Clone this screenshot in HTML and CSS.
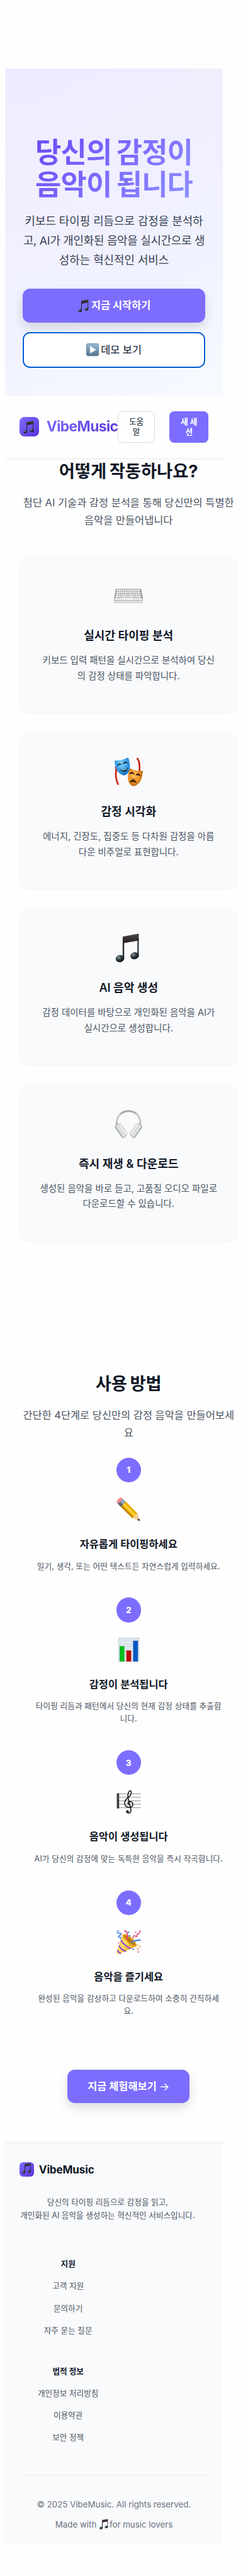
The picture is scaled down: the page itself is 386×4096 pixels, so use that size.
FILE: index.html
```html
<!DOCTYPE html>
<html lang="ko">
<head>
<meta charset="utf-8">
<meta name="viewport" content="width=device-width, initial-scale=1">
<title>VibeMusic</title>
<link rel="stylesheet" href="styles.css">
</head>
<body>
<svg class="defs" aria-hidden="true">
  <defs>
    <linearGradient id="beam" x1="0" y1="0" x2="0" y2="1"><stop offset="0" stop-color="#4a4547"/><stop offset=".35" stop-color="#2a2021"/><stop offset="1" stop-color="#1d1718"/></linearGradient>
    <radialGradient id="head" cx=".4" cy=".3" r=".7"><stop offset="0" stop-color="#8fa0a6"/><stop offset=".4" stop-color="#37444b"/><stop offset="1" stop-color="#0b0d10"/></radialGradient>
    <symbol id="note" viewBox="0 0 48 48">
      <path d="M14.4 5.4 40.8.6V12L16.8 16V42h-2.4z" fill="url(#beam)"/>
      <path d="M38.6 9h2.2v29h-2.2z" fill="#252b2f"/><path d="M14.4 14h2.2v28h-2.2z" fill="#252b2f"/>
      <ellipse cx="9.9" cy="41.7" rx="7" ry="5.8" transform="rotate(-14 9.9 41.7)" fill="url(#head)"/>
      <ellipse cx="34" cy="37" rx="7" ry="5.7" transform="rotate(-14 34 37)" fill="url(#head)"/>
    </symbol>
  </defs>
</svg>
<div class="page">
  <section class="hero">
    <h1 class="hero-title">당신의 감정이<br>음악이 됩니다</h1>
    <p class="hero-text">키보드 타이핑 리듬으로 감정을 분석하<br><span class="tight">고, AI가 개인화된 음악을 실시간으로 생</span><br>성하는 혁신적인 서비스</p>
    <div class="hero-actions">
      <button class="btn btn-primary"><svg class="btn-note"><use href="#note"/></svg>지금 시작하기</button>
      <button class="btn btn-outline">
        <svg class="btn-play" viewBox="0 0 21 21"><defs><linearGradient id="pl" x1="0" y1="0" x2="0" y2="1"><stop offset="0" stop-color="#9bbad2"/><stop offset=".5" stop-color="#7799b4"/><stop offset="1" stop-color="#58758f"/></linearGradient></defs><rect width="21" height="21" rx="3.6" fill="#5d7e98"/><rect x=".8" y=".8" width="19.4" height="19" rx="3" fill="url(#pl)"/><path d="M6.2 4.4v12.2L16.4 10.5z" fill="#fff"/></svg>데모 보기</button>
    </div>
  </section>

  <header class="topbar">
    <span class="logo"><svg><use href="#note"/></svg></span>
    <span class="brand">VibeMusic</span>
    <button class="nav-btn">도움<br>말</button>
    <button class="nav-btn nav-btn-new">새 세<br>션</button>
  </header>

  <section class="features">
    <h2 class="section-title">어떻게 작동하나요?</h2>
    <p class="section-text">첨단 AI 기술과 감정 분석을 통해 당신만의 특별한<br>음악을 만들어냅니다</p>
    <div class="cards">
      <article class="card">
        <svg class="card-icon" viewBox="0 0 48 48">
          <path d="M3.2 13.2h41.6l3 18.4v3.6H.2v-3.6z" fill="#f1f1f1" stroke="#a3a3a3" stroke-width=".9"/>
          <path d="M.5 32h47" stroke="#8d8d8d" stroke-width=".9"/>
          <path d="M3.6 14.200h40.8l2.4 15.400H1.200z" fill="#868686"/>
          <g stroke="#fff" stroke-width="2.300"><path d="M4.5 15.900h39" stroke-dasharray="2.6 .65"/><path d="M4 19.100h40" stroke-dasharray="3.3 .6 2.4 .6"/><path d="M3.5 22.300h41" stroke-dasharray="4 .6 2.5 .6 2.5 .6"/><path d="M3 25.400h42" stroke-dasharray="5 .6 2.5 .6 2.6 .6"/><path d="M2.400 28.500h43" stroke-dasharray="2.8 .6 2.8 .6 2.8 .6 20 .6"/></g>
        </svg>
        <h3>실시간 타이핑 분석</h3>
        <p>키보드 입력 패턴을 실시간으로 분석하여 당신<br>의 감정 상태를 파악합니다.</p>
      </article>
      <article class="card">
        <svg class="card-icon" viewBox="0 0 48 48">
          <defs><radialGradient id="mb" cx=".45" cy=".35" r=".7"><stop offset="0" stop-color="#8ed6ff"/><stop offset=".55" stop-color="#3aa0e8"/><stop offset="1" stop-color="#1663ae"/></radialGradient><radialGradient id="mo" cx=".4" cy=".4" r=".7"><stop offset="0" stop-color="#ffc05c"/><stop offset=".6" stop-color="#e58a22"/><stop offset="1" stop-color="#9c5208"/></radialGradient></defs>
          <path d="M3 15c2 9-1 12 .5 18 .6 4 1.200 8 3.500 12" fill="none" stroke="#c9240e" stroke-width="2.800"/><path d="M5.500 44.500 8.500 44" stroke="#e5391c" stroke-width="2"/>
          <path d="M38 1.500c4 5 4.500 10 4 22" fill="none" stroke="#c9240e" stroke-width="2.800"/>
          <path d="M1.200 5.800C10 5.500 17 3.600 23.500.4 27 10 27.500 21 23 26c-2 2.600-4 4-7 4C6.500 28 1 18 1.200 5.800z" fill="url(#mb)"/>
          <path d="M5.500 14.500c1-3.600 4.500-4.600 7-2.400-2.700-.8-5 .1-7 2.400zM15 11.200c1-3.700 5-4.400 7.200-1.700-2.700-.9-5-.4-7.200 1.700z" fill="#142534" stroke="#142534"/>
          <path d="M9.500 19.300c5 2 9 .8 13-2.300-.1 8.500-10 9-13 2.300z" fill="#082a45"/><path d="M11.500 20.500c4 1 7 .2 9.800-1.800" stroke="#dff" fill="none"/>
          <path d="M26.500 18.200C34 22.500 41 23.500 47.600 22.200 47 32 45 42 36 46.500c-3 1.400-6 1.300-8-.5-6.500-6-6.500-17-1.500-27.800z" fill="url(#mo)"/>
          <path d="M25.500 27.500c2.500-4 6-3.600 7.500.7-2.300-1.800-4.500-2-7.500-.7zM36 29.500c2.500-3.600 6.200-2.600 7 1.600-2-2-4.300-2.600-7-1.600z" fill="#2b1606" stroke="#2b1606"/>
          <path d="M26 42c1.500-7 9.500-6.600 11.500.8-4-2.400-7.500-2.700-11.500-.8z" fill="#3a1a03"/><path d="M29 35l3 1.500 3-.8" stroke="#8d4708" fill="none"/>
        </svg>
        <h3>감정 시각화</h3>
        <p>에너지, 긴장도, 집중도 등 다차원 감정을 아름<br>다운 비주얼로 표현합니다.</p>
      </article>
      <article class="card">
        <svg class="card-icon"><use href="#note"/></svg>
        <h3>AI 음악 생성</h3>
        <p>감정 데이터를 바탕으로 개인화된 음악을 AI가<br>실시간으로 생성합니다.</p>
      </article>
      <article class="card">
        <svg class="card-icon" viewBox="0 0 48 48">
          <defs><linearGradient id="cup" x1="0" y1="0" x2="1" y2="0"><stop offset="0" stop-color="#a9afb2"/><stop offset=".5" stop-color="#f0f1f1"/><stop offset="1" stop-color="#b3b3b3"/></linearGradient></defs>
          <path d="M4.600 25C4 14 10 2.600 24 2.600S44 14 43.400 25" fill="none" stroke="#9c9c9c" stroke-width="2.600"/>
          <path d="M4.600 22C5.500 12 11 2.600 24 2.600S42.500 12 43.400 22" fill="none" stroke="#e6e6e6" stroke-width="1.200"/>
          <path d="M11 7.500C18 1.500 30 1.500 37 7.500" fill="none" stroke="#aaa" stroke-width="3"/>
          <g><rect x="6.600" y="23" width="8.500" height="25" rx="4" transform="rotate(-34 10.800 35)" fill="url(#cup)" stroke="#858a8d" stroke-width=".7"/><rect x="11.500" y="22" width="5.500" height="22" rx="2.700" transform="rotate(-34 14 33)" fill="#ebe9e7" stroke="#b4b2b0" stroke-width=".6"/></g>
          <g transform="matrix(-1 0 0 1 48 0)"><rect x="6.600" y="23" width="8.500" height="25" rx="4" transform="rotate(-34 10.800 35)" fill="url(#cup)" stroke="#858a8d" stroke-width=".7"/><rect x="11.500" y="22" width="5.500" height="22" rx="2.700" transform="rotate(-34 14 33)" fill="#ebe9e7" stroke="#b4b2b0" stroke-width=".6"/></g>
        </svg>
        <h3>즉시 재생 &amp; 다운로드</h3>
        <p>생성된 음악을 바로 듣고, 고품질 오디오 파일로<br>다운로드할 수 있습니다.</p>
      </article>
    </div>
  </section>

  <section class="howto">
    <h2 class="section-title">사용 방법</h2>
    <p class="section-text">간단한 4단계로 당신만의 감정 음악을 만들어보세<br>요</p>
    <ol class="steps">
      <li class="step">
        <span class="step-num">1</span>
        <svg class="step-icon" viewBox="0 0 40 40">
          <g transform="translate(1.500 1.500) rotate(45)">
            <path d="M5-5.700H2.500C-1-5.700-1 5.700 2.500 5.700H5z" transform="translate(2.200 0)" fill="#f08f92"/>
            <path d="M7-5.700h7v11.400H7z" fill="#8d9cab"/><path d="M7 1h7v4.700H7z" fill="#4c4f54"/><path d="M9-5.700v11.400M11.500-5.700v11.400" stroke="#b8c5d2" stroke-width=".7"/>
            <path d="M14-5.700h27v11.400H14z" fill="#fbbf08"/><path d="M14-5.700h27v3H14z" fill="#e9a900"/><path d="M14-1.800h27v1.600H14z" fill="#ffe063"/><path d="M14 2.700h27v3H14z" fill="#bf8505"/>
            <path d="M41-5.700c-2 2 0 3 0 3.800-1.500 1-1.500 3 0 4-1 1.200-1 2.500 0 3.600L52.500 0z" fill="#f2cf93"/><path d="M48.500-2 53 0l-4.500 2z" fill="#2b2b2b"/>
          </g>
        </svg>
        <h3>자유롭게 타이핑하세요</h3>
        <p>일기, 생각, 또는 어떤 텍스트든 자연스럽게 입력하세요.</p>
      </li>
      <li class="step">
        <span class="step-num">2</span>
        <svg class="step-icon" viewBox="0 0 40 40">
          <rect x="3.200" y=".4" width="34" height="39.400" fill="#dbe5ee"/><path d="M3.200.9h34M3.600.4v39.400M36.900.4v39.400" stroke="#bccad6" stroke-width=".9"/>
          <path d="M11 1v38M21 1v38M31 1v38M4 8h33M4 16h33M4 24h33M4 32h33" stroke="#e9f0f6" stroke-width=".7"/>
          <rect x="5.200" y="14" width="8" height="25.800" fill="#08bd1b"/><rect x="16.200" y="21" width="8" height="18.800" fill="#bd0808"/><rect x="27.400" y="5" width="8" height="34.800" fill="#0759c0"/>
        </svg>
        <h3>감정이 분석됩니다</h3>
        <p>타이핑 리듬과 패턴에서 당신의 현재 감정 상태를 추출합<br>니다.</p>
      </li>
      <li class="step">
        <span class="step-num">3</span>
        <svg class="step-icon" viewBox="0 0 40 40">
          <path d="M2 6.500h38M2 12.200h38M2 18h38M2 23.700h38M2 29.300h38" stroke="#888" stroke-width="1"/><path d="M.6 5.600h3.800v25H.6z" fill="#3c3c3c"/>
          <path d="M20.500 24.200c-2.200-.3-2.300-5.200 1.500-5.200 6.500.2 7 9.500-.2 9.700-9.600.2-10.500-9.200-4.500-14.200 5.500-5 8.300-7.500 6.800-12-2.600-4-6.600 4-5 10.500l4.700 19.500c.9 6-5.500 7.400-7 3.500" fill="none" stroke="#1f1f1f" stroke-width="1.700" stroke-linecap="round"/><circle cx="18" cy="35.800" r="2.300" fill="#1f1f1f"/>
        </svg>
        <h3>음악이 생성됩니다</h3>
        <p>AI가 당신의 감정에 맞는 독특한 음악을 즉시 작곡합니다.</p>
      </li>
      <li class="step">
        <span class="step-num">4</span>
        <svg class="step-icon" viewBox="0 0 40 40">
          <defs><linearGradient id="cone" x1="0" y1="0" x2="1" y2=".6"><stop offset="0" stop-color="#d39b13"/><stop offset=".45" stop-color="#ffe268"/><stop offset="1" stop-color="#d79810"/></linearGradient></defs>
          <path d="M10.200 9 33 26.500 4.500 39.300C1 40.600-.6 38.500.4 35.500z" fill="url(#cone)"/>
          <path d="M10 8.500c2-4 10-1 16 5 5.500 5.500 8 10.500 6.400 13-4 1.500-10-2-15-7.500-4.800-5-8-8-7.400-10.500z" fill="#dd9d16"/><path d="M13 9c4-.6 16 9.500 18.500 16-6 0-17-10-18.500-16z" fill="#b5750c"/>
          <path d="M7.400 16.500C10 22 17 28 23.500 30.600M4 25.500c3 5 7 8.500 11.500 9.500M1.400 33c1.500 3 3 5 6 5.500" fill="none" stroke="#9448cf" stroke-width="2.300"/>
          <path d="M12.500 1c5 0 6 5 5 14.500" fill="none" stroke="#ee456f" stroke-width="2"/><path d="M24 20.500c5-3 9-4 16-4" fill="none" stroke="#3f86e8" stroke-width="2.200"/>
          <path d="M4 .5c-4 2.500-3 5 1 4.500s3 3-1 4.500c-2 1.500 0 2.500 3 2.500-1 1-1 2 0 3" fill="none" stroke="#3475d9" stroke-width="1.500"/>
          <path d="M40 .8c-3 .8-1 5-4 5.600-3-.5-2 2-2.500 4-2 1.500-3-2.500-5-1-2 1-1 3-1 4.500" fill="none" stroke="#e3426f" stroke-width="1.600"/>
          <g fill="#4889de"><circle cx="19.500" cy="3.500" r="1.500"/><circle cx="21.500" cy="9.500" r="1.400"/><circle cx="27.500" cy="31.500" r="1.400"/></g><g fill="#e87ca0"><circle cx="31.500" cy="3" r="1.300"/><circle cx="3.500" cy="21" r="1.300"/><circle cx="36" cy="36" r="1.500"/></g><g fill="#eda13b"><circle cx="35" cy="31" r="1.500"/><circle cx="38.500" cy="27" r="1.400"/><circle cx="34.500" cy="24.500" r="1.200"/><circle cx="8.500" cy="7" r="1.200"/></g>
        </svg>
        <h3>음악을 즐기세요</h3>
        <p>완성된 음악을 감상하고 다운로드하여 소중히 간직하세<br>요.</p>
      </li>
    </ol>
    <button class="btn btn-primary btn-cta">지금 체험해보기&nbsp;<span class="arrow">→</span></button>
  </section>

  <footer class="footer">
    <div class="footer-brand"><span class="logo logo-small"><svg><use href="#note"/></svg></span><span>VibeMusic</span></div>
    <p class="footer-text">당신의 타이핑 리듬으로 감정을 읽고,<br>개인화된 AI 음악을 생성하는 혁신적인 서비스입니다.</p>
    <nav class="links">
      <h4>지원</h4>
      <a>고객 지원</a><a>문의하기</a><a>자주 묻는 질문</a>
    </nav>
    <nav class="links">
      <h4>법적 정보</h4>
      <a>개인정보 처리방침</a><a>이용약관</a><a>보안 정책</a>
    </nav>
    <div class="legal">
      <p>© 2025 VibeMusic. All rights reserved.</p>
      <p class="made">Made with <svg><use href="#note"/></svg>for music lovers</p>
    </div>
  </footer>
</div>
</body>
</html>
```
FILE: styles.css
```css
* { box-sizing: border-box; }
html { overflow: hidden; }
body {
  margin: 0;
  background: #fefefe;
  font-family: Inter, "Noto Sans CJK KR", sans-serif;
  color: #111827;
}
h1, h2, h3, h4, p, ol { margin: 0; padding: 0; }
svg { display: block; }
button { font-family: inherit; margin: 0; padding: 0; }
.defs { position: absolute; width: 0; height: 0; }
.page {
  zoom: 0.9656;
  width: 399px;
  height: 4241px;
  padding: 113px 0 0 8px;
  white-space: nowrap;
}

.hero {
  width: 359px;
  height: 538px;
  padding: 112.5px 29px 0;
  text-align: center;
  background: linear-gradient(155deg, #eeebff 0%, #f0efff 35%, #f1f2ff 65%, #f7faff 100%);
}
.hero-title {
  width: max-content;
  margin: 0 auto;
  font-size: 46.5px;
  line-height: 53px;
  font-weight: 700;
  letter-spacing: -0.9px;
  word-spacing: -2.5px;
  background: linear-gradient(135deg, #6d48f5 0%, #7c6dff 50%, #8f90ff 100%);
  -webkit-background-clip: text;
  background-clip: text;
  color: transparent;
}
.hero-text {
  margin-top: 16px;
  font-size: 18.5px;
  line-height: 32.3px;
  color: #374151;
}
.tight { letter-spacing: -0.25px; }
.hero-actions { display: flex; flex-direction: column; gap: 15.5px; margin-top: 31px; }
.btn {
  display: flex;
  align-items: center;
  justify-content: center;
  border: 0;
  border-radius: 12px;
  font-size: 17px;
  line-height: 24px;
}
.btn-primary {
  height: 55.5px;
  background: #7c6dff;
  color: #fff;
  font-weight: 700;
  box-shadow: 0 8px 18px rgba(0, 0, 0, 0.13);
}
.btn-outline {
  height: 60px;
  border: 2.1px solid #005bd3;
  background: #fff;
  color: #374151;
  font-weight: 500;
  box-shadow: 0 0 0 1px #fff;
}
.btn-note { width: 21px; height: 21px; margin-right: 2px; }
.btn-play { width: 21px; height: 21px; margin-right: 3px; }

.topbar {
  display: flex;
  align-items: center;
  width: 359px;
  height: 105px;
  padding-left: 24px;
  border-bottom: 1px solid #e5e7eb;
}
.logo {
  display: flex;
  align-items: center;
  justify-content: center;
  width: 32px;
  height: 32px;
  border-radius: 8px;
  background: linear-gradient(135deg, #7c6dff, #5a33d6);
}
.logo svg { width: 21px; height: 21px; }
.brand {
  width: 117px;
  margin-left: 12.5px;
  font-size: 23.6px;
  line-height: 32px;
  font-weight: 700;
  letter-spacing: -0.6px;
  background: linear-gradient(135deg, #7c6dff, #5a33d6);
  -webkit-background-clip: text;
  background-clip: text;
  color: transparent;
}
.nav-btn {
  width: 61.5px;
  height: 51.5px;
  border: 1px solid #d6d8de;
  border-radius: 8px;
  background: #fff;
  color: #374151;
  font-size: 13.1px;
  line-height: 16.8px;
  font-weight: 500;
}
.nav-btn-new {
  width: 64px;
  margin-left: 24px;
  border: 0;
  background: #7c6dff;
  color: #fff;
  font-weight: 600;
}

.features, .howto { width: 359px; margin-left: 24px; text-align: center; }
.features { height: 1289.5px; padding-top: 3.5px; }
.section-title {
  font-size: 28.3px;
  line-height: 36px;
  font-weight: 700;
  word-spacing: -2px;
}
.section-text { margin-top: 17.7px; font-size: 17px; line-height: 29px; color: #4b5563; }
.cards { display: flex; flex-direction: column; gap: 32px; margin-top: 46.8px; }
.card {
  height: 257.8px;
  padding-top: 38px;
  border: 1px solid #f3f4f6;
  border-radius: 16px;
  background: #f9fafc;
}
.card-icon { width: 48px; height: 48px; margin: 0 auto; }
.card h3 { margin-top: 29.7px; font-size: 18.7px; line-height: 24px; font-weight: 600; }
.card p { margin-top: 16.4px; font-size: 15px; line-height: 25.8px; color: #4b5563; }

.howto { height: 1481.5px; padding-top: 216.5px; }
.steps { height: 1008.3px; margin-top: 26.8px; list-style: none; }
.step { padding-bottom: 41.3px; }
.step-num {
  display: flex;
  align-items: center;
  justify-content: center;
  width: 40.5px;
  height: 40.5px;
  margin: 0 auto;
  border-radius: 50%;
  background: #7c6dff;
  color: #fff;
  font-size: 14px;
  font-weight: 800;
}
.step-icon { width: 40px; height: 40px; margin: 25px auto 0; }
.step h3 { margin-top: 25.2px; font-size: 17px; line-height: 24px; font-weight: 600; }
.step p { margin-top: 13.8px; font-size: 13.1px; line-height: 20.8px; letter-spacing: 0.1px; color: #4b5563; }
.btn-cta { width: 201px; height: 54px; margin: 0 auto; }
.arrow { font-size: 18px; font-weight: 400; }

.footer {
  width: 359px;
  height: 664.5px;
  padding: 31px 24px 0;
  border-top: 2.1px solid #f0f1f4;
  background: #f9fafc;
}
.footer-brand { display: flex; align-items: center; gap: 8px; height: 24.5px; font-size: 17.8px; font-weight: 700; letter-spacing: -0.2px; }
.logo-small { width: 24px; height: 24.5px; border-radius: 6px; }
.logo-small svg { width: 18px; height: 18px; margin-top: -4px; }
.footer-text { width: 290px; margin-top: 31px; text-align: center; font-size: 13.1px; line-height: 22px; color: #4b5563; }
.links { display: flex; flex-direction: column; align-items: center; width: 160px; margin-top: 58.5px; font-size: 13.1px; color: #4b5563; }
.links h4 { font-size: 13.1px; line-height: 20px; font-weight: 700; color: #111827; }
.links a { margin-top: 16.6px; line-height: 20px; }
.links + .links { margin-top: 46.7px; }
.legal {
  margin-top: 50.5px;
  padding-top: 38px;
  border-top: 2.1px solid #f0f1f4;
  text-align: center;
  font-size: 13.8px;
  line-height: 20px;
  color: #6b7280;
}
.made { display: flex; justify-content: center; align-items: center; margin-top: 13px; white-space: pre; }
.made svg { width: 17.5px; height: 17.5px; margin-top: -3px; }
```
